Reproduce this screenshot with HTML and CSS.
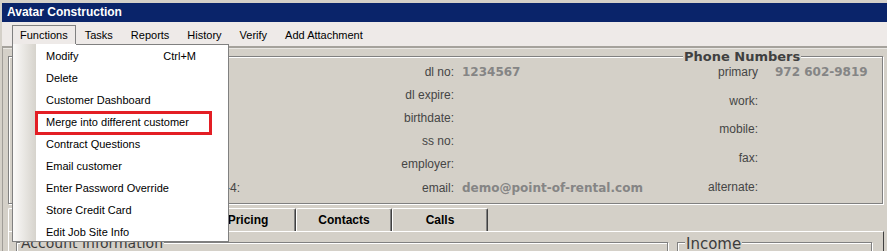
FILE: index.html
```html
<!DOCTYPE html>
<html>
<head>
<meta charset="utf-8">
<title>Avatar Construction</title>
<link rel="stylesheet" href="styles.css">
</head>
<body>
<div class="window">
  <div class="titlebar">Avatar Construction</div>
  <div class="menubar">
    <div class="menu-item open">Functions</div>
    <div class="menu-item">Tasks</div>
    <div class="menu-item">Reports</div>
    <div class="menu-item">History</div>
    <div class="menu-item">Verify</div>
    <div class="menu-item">Add Attachment</div>
  </div>
  <div class="client">
    <div class="group details">
      <span class="legend phone-legend">Phone Numbers</span>
      <div class="addr">
        <span class="label r6">zip-4:</span>
      </div>
      <div class="info">
        <span class="label">dl no:</span><span class="value">1234567</span>
        <span class="label">dl expire:</span><span class="value"></span>
        <span class="label">birthdate:</span><span class="value"></span>
        <span class="label">ss no:</span><span class="value"></span>
        <span class="label">employer:</span><span class="value"></span>
        <span class="label">email:</span><span class="value">demo@point-of-rental.com</span>
      </div>
      <div class="phone">
        <span class="label">primary</span><span class="value">972 602-9819</span>
        <span class="label">work:</span><span class="value"></span>
        <span class="label">mobile:</span><span class="value"></span>
        <span class="label">fax:</span><span class="value"></span>
        <span class="label">alternate:</span><span class="value"></span>
      </div>
    </div>
    <div class="tabs">
      <div class="tab"></div>
      <div class="tab"></div>
      <div class="tab">Pricing</div>
      <div class="tab">Contacts</div>
      <div class="tab">Calls</div>
    </div>
    <div class="tab-panel">
      <div class="group account"><span class="legend account-legend">Account Information</span></div>
      <div class="group income"><span class="legend income-legend">Income</span></div>
    </div>
  </div>

  <div class="dropdown">
    <div class="dd-item"><span>Modify</span><span class="shortcut">Ctrl+M</span></div>
    <div class="dd-item"><span>Delete</span></div>
    <div class="dd-item"><span>Customer Dashboard</span></div>
    <div class="dd-item marked"><span>Merge into different customer</span><span class="mark"></span></div>
    <div class="dd-item"><span>Contract Questions</span></div>
    <div class="dd-item"><span>Email customer</span></div>
    <div class="dd-item"><span>Enter Password Override</span></div>
    <div class="dd-item"><span>Store Credit Card</span></div>
    <div class="dd-item"><span>Edit Job Site Info</span></div>
  </div>
</div>
</body>
</html>
```

FILE: styles.css
```css
* { box-sizing: border-box; }

body {
  margin: 0;
  background: #d4d0c8;
  font-family: "Liberation Sans", Arial, sans-serif;
}

.window {
  position: relative;
  width: 887px;
  height: 251px;
  overflow: hidden;
  background: #d4d0c8;
  padding: 3px 0 0 2px;
}

.titlebar {
  height: 19px;
  background: #0a246a;
  color: #fff;
  font-weight: bold;
  font-size: 12px;
  line-height: 19px;
  padding-left: 5px;
}

.menubar {
  height: 24px;
  background: #eeeae8;
  display: flex;
  padding: 3px 0 0 10px;
  font-size: 11px;
}

.menu-item {
  height: 19px;
  line-height: 18px;
  padding: 0 8px;
  border: 1px solid transparent;
  border-bottom: none;
  color: #000;
  white-space: nowrap;
}

.menu-item.open {
  border-color: #808080;
  padding: 0 7px;
}

.client {
  border-top: 2px solid #a5a29c;
  border-left: 1px solid #a09d98;
  box-shadow: inset 0 1px 0 #e9e7e3;
  padding: 8px 0 0 5px;
  height: 205px;
}

.group {
  position: relative;
  border: 1px solid #808080;
  box-shadow: 1px 1px 0 #fff, inset 1px 1px 0 #fff;
}

.legend {
  position: absolute;
  background: #d4d0c8;
  padding: 0 1px;
  font-family: "DejaVu Sans", sans-serif;
  font-size: 14px;
  line-height: 16px;
  color: #3c3c3c;
  white-space: nowrap;
}

.phone-legend {
  top: -8px;
  left: 674px;
  font-weight: bold;
  font-size: 13px;
  color: #404040;
}

.details {
  width: 875px;
  height: 148px;
  display: flex;
}

.addr {
  width: 231px;
  display: grid;
  grid-template-rows: repeat(6, 23.2px);
  align-content: start;
  padding-top: 3.7px;
}

.addr .r6 { grid-row: 6; }

.info {
  width: 440px;
  display: grid;
  grid-template-columns: 214px auto;
  column-gap: 8px;
  grid-auto-rows: 23.2px;
  align-content: start;
  padding-top: 3.7px;
}

.phone {
  flex: 1;
  display: grid;
  grid-template-columns: 78px auto;
  column-gap: 17px;
  grid-auto-rows: 28.75px;
  align-content: start;
  padding-top: 0.9px;
}

.label {
  font-size: 12px;
  color: #454545;
  text-align: right;
  white-space: nowrap;
  line-height: 23px;
}

.phone .label { line-height: 28px; }

.value {
  font-family: "DejaVu Sans", sans-serif;
  font-weight: bold;
  font-size: 12px;
  color: #858585;
  white-space: nowrap;
  line-height: 23px;
}

.phone .value { line-height: 28px; }

.tabs {
  display: flex;
  margin-top: 4px;
  height: 23px;
}

.tab {
  width: 96px;
  height: 23px;
  border-top: 1px solid #fff;
  border-left: 1px solid #fff;
  border-right: 1px solid #404040;
  box-shadow: inset -1px 0 0 #808080;
  border-radius: 2px 2px 0 0;
  font-weight: bold;
  font-size: 12px;
  line-height: 22px;
  text-align: center;
  color: #000;
}

.tab-panel {
  width: 876px;
  height: 30px;
  border-top: 1px solid #fff;
  border-left: 1px solid #fff;
  border-right: 1px solid #404040;
  display: flex;
  padding: 10px 0 0 7px;
}

.account {
  width: 652px;
  height: 40px;
}

.account-legend {
  top: -8px;
  left: 3px;
}

.income {
  width: 195px;
  height: 40px;
  margin-left: 9px;
}

.income-legend {
  top: -7px;
  left: 7px;
  font-size: 15px;
  line-height: 17px;
}

/* Open Functions menu */
.dropdown {
  position: absolute;
  left: 12px;
  top: 44px;
  width: 217px;
  height: 198px;
  border: 1px solid #808080;
  border-top: none;
  padding-top: 1px;
  background: linear-gradient(to right, #fbfaf9 0, #d6d3cc 23px, #ffffff 23px);
  font-size: 11px;
  color: #000;
}

.dropdown::before {
  content: "";
  position: absolute;
  top: 0;
  left: 63px;
  right: 0;
  height: 1px;
  background: #808080;
}

.dd-item {
  position: relative;
  height: 22px;
  line-height: 22px;
  padding: 0 32px 0 33px;
  display: flex;
  justify-content: space-between;
  white-space: nowrap;
}

.mark {
  position: absolute;
  left: 22px;
  top: 0;
  width: 177px;
  height: 24px;
  border: 3px solid #e31e24;
}
```
